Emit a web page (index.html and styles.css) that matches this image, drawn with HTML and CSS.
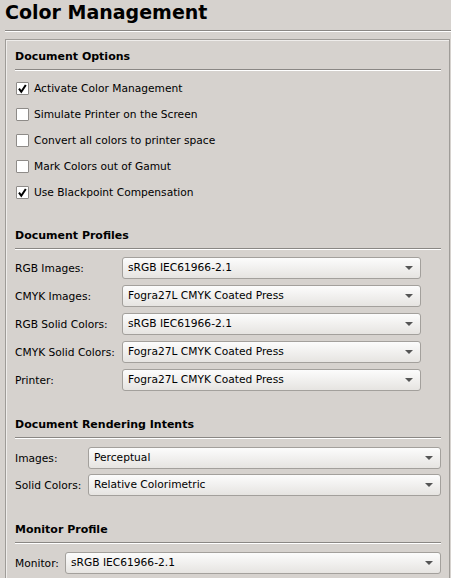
FILE: index.html
```html
<!DOCTYPE html>
<html>
<head>
<meta charset="utf-8">
<link rel="stylesheet" href="styles.css">
</head>
<body>
<div class="title">Color Management</div>
<div class="group">
  <section class="section">
    <div class="heading">Document Options</div>
    <div class="checks">
      <div class="check-row"><span class="box"><svg viewBox="0 0 13 13" width="13" height="13"><path d="M3 6.6 L5.3 9.8 L9.8 3" fill="none" stroke="#000" stroke-width="2"/></svg></span>Activate Color Management</div>
      <div class="check-row"><span class="box"></span>Simulate Printer on the Screen</div>
      <div class="check-row"><span class="box"></span>Convert all colors to printer space</div>
      <div class="check-row"><span class="box"></span>Mark Colors out of Gamut</div>
      <div class="check-row"><span class="box"><svg viewBox="0 0 13 13" width="13" height="13"><path d="M3 6.6 L5.3 9.8 L9.8 3" fill="none" stroke="#000" stroke-width="2"/></svg></span>Use Blackpoint Compensation</div>
    </div>
  </section>
  <section class="section">
    <div class="heading">Document Profiles</div>
    <div class="form form-profiles">
      <span class="label">RGB Images:</span><div class="combo">sRGB IEC61966-2.1<i class="arrow"></i></div>
      <span class="label">CMYK Images:</span><div class="combo">Fogra27L CMYK Coated Press<i class="arrow"></i></div>
      <span class="label">RGB Solid Colors:</span><div class="combo">sRGB IEC61966-2.1<i class="arrow"></i></div>
      <span class="label">CMYK Solid Colors:</span><div class="combo">Fogra27L CMYK Coated Press<i class="arrow"></i></div>
      <span class="label">Printer:</span><div class="combo">Fogra27L CMYK Coated Press<i class="arrow"></i></div>
    </div>
  </section>
  <section class="section">
    <div class="heading">Document Rendering Intents</div>
    <div class="form form-intents">
      <span class="label">Images:</span><div class="combo">Perceptual<i class="arrow"></i></div>
      <span class="label">Solid Colors:</span><div class="combo">Relative Colorimetric<i class="arrow"></i></div>
    </div>
  </section>
  <section class="section">
    <div class="heading">Monitor Profile</div>
    <div class="form form-monitor">
      <span class="label">Monitor:</span><div class="combo">sRGB IEC61966-2.1<i class="arrow"></i></div>
    </div>
  </section>
</div>
</body>
</html>
```
FILE: styles.css
```css
html, body {
  margin: 0;
  padding: 0;
  background: #d6d2ce;
  overflow: hidden;
}
body {
  font-family: "DejaVu Sans", sans-serif;
  font-size: 8pt;
  color: #000;
  height: 578px;
}
.title {
  margin-left: 5px;
  font-size: 19px;
  font-weight: bold;
  line-height: 24px;
  height: 24px;
  padding-bottom: 6px;
  border-bottom: 1px solid #8a8784;
  box-shadow: 0 1px 0 #ffffff;
  color: #000;
}
.group {
  margin: 8px 1px 0 5px;
  border: 1px solid #9f9c98;
  box-shadow: inset 1px 1px 0 #efedeb;
  padding: 6px 8px 0 9px;
  height: 560px;
}
.section + .section {
  margin-top: 23px;
}
.heading {
  font-size: 11px;
  font-weight: bold;
  line-height: 19px;
  padding-top: 1px;
  padding-bottom: 3px;
  border-bottom: 1px solid #8a8784;
  box-shadow: 0 1px 0 #ffffff;
}
.checks {
  margin-top: 5px;
  margin-bottom: -3px;
}
.check-row {
  height: 26px;
  display: flex;
  align-items: center;
}
.box {
  width: 11px;
  height: 11px;
  margin-left: 1px;
  margin-right: 5px;
  border: 1px solid #8e8b88;
  background: #fff;
  border-radius: 1px;
  position: relative;
}
.box svg {
  position: absolute;
  left: -1px;
  top: -1px;
}
.form {
  display: grid;
  row-gap: 6px;
  align-items: center;
}
.form-profiles {
  margin-top: 8px;
  grid-template-columns: 107px 299px;
}
.form-intents {
  margin-top: 9px;
  row-gap: 5px;
  grid-template-columns: 73px 353px;
}
.form-monitor {
  margin-top: 9px;
  grid-template-columns: 50px 376px;
}
.combo {
  box-sizing: border-box;
  height: 22px;
  line-height: 20px;
  border: 1px solid #a3a09c;
  border-radius: 3px;
  background: linear-gradient(#fcfcfc, #e6e4e1);
  padding-left: 5px;
  position: relative;
  white-space: nowrap;
}
.arrow {
  position: absolute;
  right: 7px;
  top: 8px;
  width: 0;
  height: 0;
  border-left: 4px solid transparent;
  border-right: 4px solid transparent;
  border-top: 4px solid #555;
}
```
